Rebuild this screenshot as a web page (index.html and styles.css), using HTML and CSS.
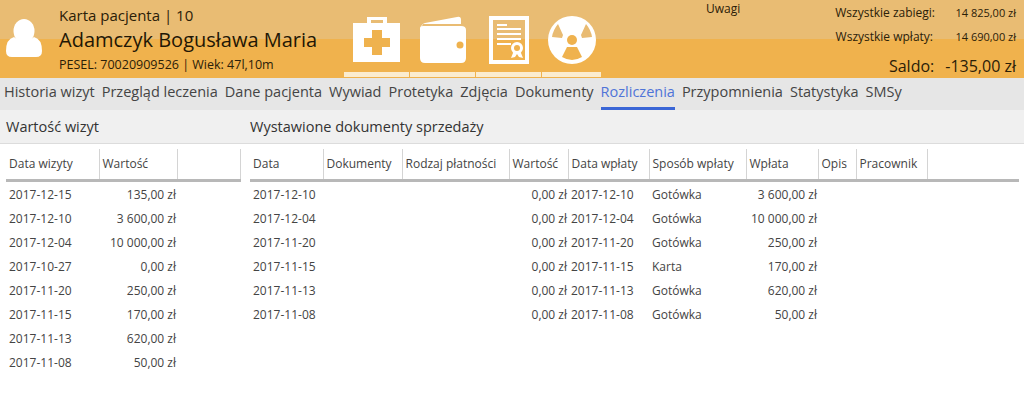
FILE: index.html
```html
<!DOCTYPE html>
<html lang="en">

<head>
    <meta charset="UTF-8">
    <title>Karta pacjenta</title>
    <link rel="stylesheet" href="styles.css">
</head>

<body>
    <header class="top">
        <div class="avatar">
            <svg width="44" height="44" viewBox="0 0 44 44">
                <ellipse cx="24" cy="16" rx="10.5" ry="12" fill="#fff" />
                <path d="M6 40 Q6 28 14 26 Q24 34 34 26 Q42 28 42 40 Q42 46 36 46 L12 46 Q6 46 6 40 Z" fill="#fff" transform="translate(0,-4)" />
            </svg>
        </div>
        <div class="patient">
            <div class="card-no">Karta pacjenta | 10</div>
            <div class="name">Adamczyk Bogusława Maria</div>
            <div class="pesel">PESEL: 70020909526 | Wiek: 47l,10m</div>
        </div>
        <div class="tiles">
            <div class="tile t1">
                <svg width="50" height="46" viewBox="0 0 50 46">
                    <path fill-rule="evenodd" d="M15 7V1H35V7H48V46H1V7ZM19 7H31V4H19Z" fill="#fff" />
                    <path d="M20 14H30V22H38V31H30V39H20V31H12V22H20Z" fill="#efb24e" />
                </svg>
            </div>
            <div class="tile t2">
                <svg width="48" height="48" viewBox="0 0 48 48">
                    <path d="M2 12 Q2 8 6 7 L38 1 Q42 0 42 4 V8 H4 Z" fill="#fff" />
                    <path fill-rule="evenodd" d="M1 12 Q1 10 4 10 H42 Q47 10 47 14 V42 Q47 47 42 47 H6 Q1 47 1 42 Z" fill="#fff" />
                    <circle cx="41" cy="29" r="3.5" fill="#efb24e" />
                </svg>
            </div>
            <div class="tile t3">
                <svg width="40" height="48" viewBox="0 0 40 48">
                    <path fill-rule="evenodd" d="M0 0H40V48H0ZM4 4V44H36V4Z" fill="#fff" />
                    <path d="M8 8H18V10H8ZM8 12H32V14H8ZM8 17H32V19H8ZM8 22H32V24H8ZM8 27H22V29H8Z" fill="#fff" />
                    <circle cx="28" cy="32" r="6" fill="#fff" />
                    <circle cx="28" cy="32" r="3" fill="#efb24e" />
                    <path d="M24 37 L22 42 L26 41 L28 38 L30 41 L34 42 L32 37 Z" fill="#fff" />
                </svg>
            </div>
            <div class="tile t4">
                <svg width="48" height="48" viewBox="0 0 48 48">
                    <circle cx="24" cy="24" r="24" fill="#fff" />
                    <circle cx="24" cy="24" r="5" fill="#efb24e" />
                    <path d="M17 28 L8 33 Q4 26 5 18 Q5 17 6 16 L14 20 Q17 24 17 28Z" fill="#fff" />
                    <path d="M33 19 L38 8 Q43 14 44 21 L34 22Z" fill="#e9bb72" />
                    <path d="M15 19 L10 8 Q5 14 4 21 L14 22Z" fill="#e9bb72" />
                    <path d="M19 31 H29 L34 41 Q24 47 14 41Z" fill="#efb24e" />
                </svg>
            </div>
        </div>
        <div class="notes">Uwagi</div>
        <div class="sums">
            <div class="sum-row first"><span class="sum-label">Wszystkie zabiegi:</span><span class="sum-val">14 825,00 zł</span></div>
            <div class="sum-row second"><span class="sum-label">Wszystkie wpłaty:</span><span class="sum-val">14 690,00 zł</span></div>
            <div class="saldo"><span>Saldo:</span><span>-135,00 zł</span></div>
        </div>
    </header>

    <nav class="tabs">
        <a>Historia wizyt</a>
        <a>Przegląd leczenia</a>
        <a>Dane pacjenta</a>
        <a>Wywiad</a>
        <a>Protetyka</a>
        <a>Zdjęcia</a>
        <a>Dokumenty</a>
        <a class="active">Rozliczenia</a>
        <a>Przypomnienia</a>
        <a>Statystyka</a>
        <a>SMSy</a>
    </nav>

    <main class="content">
        <section class="visits">
            <h2>Wartość wizyt</h2>
            <table>
                <colgroup>
                    <col class="c93">
                    <col class="c78">
                    <col class="c63">
                </colgroup>
                <thead>
                    <tr><th>Data wizyty</th><th>Wartość</th><th></th></tr>
                </thead>
                <tbody>
                    <tr><td>2017-12-15</td><td class="num">135,00 zł</td><td></td></tr>
                    <tr><td>2017-12-10</td><td class="num">3 600,00 zł</td><td></td></tr>
                    <tr><td>2017-12-04</td><td class="num">10 000,00 zł</td><td></td></tr>
                    <tr><td>2017-10-27</td><td class="num">0,00 zł</td><td></td></tr>
                    <tr><td>2017-11-20</td><td class="num">250,00 zł</td><td></td></tr>
                    <tr><td>2017-11-15</td><td class="num">170,00 zł</td><td></td></tr>
                    <tr><td>2017-11-13</td><td class="num">620,00 zł</td><td></td></tr>
                    <tr><td>2017-11-08</td><td class="num">50,00 zł</td><td></td></tr>
                </tbody>
            </table>
        </section>
        <section class="docs">
            <h2>Wystawione dokumenty sprzedaży</h2>
            <table>
                <colgroup>
                    <col class="c73">
                    <col class="c79">
                    <col class="c107">
                    <col class="c59">
                    <col class="c81">
                    <col class="c97">
                    <col class="c72">
                    <col class="c38">
                    <col class="c71">
                    <col class="c92">
                </colgroup>
                <thead>
                    <tr>
                        <th>Data</th><th>Dokumenty</th><th>Rodzaj płatności</th><th>Wartość</th><th>Data wpłaty</th>
                        <th>Sposób wpłaty</th><th>Wpłata</th><th>Opis</th><th>Pracownik</th><th class="blank"></th>
                    </tr>
                </thead>
                <tbody>
                    <tr><td>2017-12-10</td><td></td><td></td><td class="num">0,00 zł</td><td>2017-12-10</td><td>Gotówka</td><td class="num">3 600,00 zł</td><td></td><td></td><td></td></tr>
                    <tr><td>2017-12-04</td><td></td><td></td><td class="num">0,00 zł</td><td>2017-12-04</td><td>Gotówka</td><td class="num">10 000,00 zł</td><td></td><td></td><td></td></tr>
                    <tr><td>2017-11-20</td><td></td><td></td><td class="num">0,00 zł</td><td>2017-11-20</td><td>Gotówka</td><td class="num">250,00 zł</td><td></td><td></td><td></td></tr>
                    <tr><td>2017-11-15</td><td></td><td></td><td class="num">0,00 zł</td><td>2017-11-15</td><td>Karta</td><td class="num">170,00 zł</td><td></td><td></td><td></td></tr>
                    <tr><td>2017-11-13</td><td></td><td></td><td class="num">0,00 zł</td><td>2017-11-13</td><td>Gotówka</td><td class="num">620,00 zł</td><td></td><td></td><td></td></tr>
                    <tr><td>2017-11-08</td><td></td><td></td><td class="num">0,00 zł</td><td>2017-11-08</td><td>Gotówka</td><td class="num">50,00 zł</td><td></td><td></td><td></td></tr>
                </tbody>
            </table>
        </section>
    </main>
</body>

</html>
```

FILE: styles.css
```css
* {
    margin: 0;
    padding: 0;
    box-sizing: border-box;
}

body {
    font-family: "Open Sans", sans-serif;
    background-color: #fff;
    color: #333;
    overflow: hidden;
}

.top {
    height: 78px;
    display: flex;
    color: #2b2008;
    background: linear-gradient(#e9bc73 0, #e9bc73 39px, #f0b24d 39px, #f0b24d 100%);
}

.avatar {
    width: 59px;
    padding: 15px 0 0 0;
}

.patient {
    width: 285px;
    padding-top: 3px;
}

.card-no {
    font-size: 15px;
    line-height: 24px;
}

.name {
    font-size: 20px;
    line-height: 26px;
    color: #1f1706;
}

.pesel {
    font-size: 12.5px;
    line-height: 22px;
    margin-top: 1px;
}

.tiles {
    display: flex;
    gap: 1px;
    width: 360px;
    height: 78px;
}

.tile {
    height: 77px;
    padding-top: 16px;
    border-bottom: 5px solid #fbeccf;
    display: flex;
    justify-content: center;
}

.t1 {
    width: 65px;
}

.t2 {
    width: 65px;
}

.t3 {
    width: 65px;
}

.t4 {
    width: 59px;
}

.notes {
    width: 120px;
    font-size: 12px;
    line-height: 18px;
    padding-left: 2px;
}

.sums {
    flex: 1;
    padding-right: 8px;
    font-size: 11.5px;
}

.sum-row {
    display: flex;
    justify-content: flex-end;
    height: 24px;
    align-items: center;
}

.sum-row.first {
    margin-top: 0;
}

.sum-label {
    font-size: 12px;
}

.sum-row.second .sum-label {
    margin-right: 2px;
}

.sum-val {
    width: 81px;
    text-align: right;
    font-size: 11px;
}

.saldo {
    display: flex;
    justify-content: flex-end;
    gap: 11px;
    font-size: 16px;
    line-height: 22px;
    margin-top: 7px;
}

.tabs {
    height: 32px;
    display: flex;
    background-color: #e6e6e6;
    padding-left: 4px;
    font-size: 14.5px;
    gap: 7px;
}

.tabs a {
    height: 32px;
    line-height: 28px;
    color: #444;
    white-space: nowrap;
}

.tabs a.active {
    color: #4f74d8;
    border-bottom: 3px solid #3a66d6;
}

.content {
    display: flex;
}

h2 {
    height: 34px;
    font-size: 14.5px;
    font-weight: 400;
    line-height: 34px;
    color: #333;
    background-color: #f0f0f0;
    border-bottom: 1px solid #dcdcdc;
}

.visits {
    width: 250px;
}

.visits h2 {
    padding-left: 6px;
}

.docs {
    flex: 1;
}

table {
    border-collapse: collapse;
    table-layout: fixed;
    margin-top: 5px;
    font-size: 12px;
    color: #444;
}

.visits table {
    width: 234px;
    margin-left: 6px;
}

.docs table {
    width: 768px;
}

.c93 { width: 93px; }
.c78 { width: 78px; }
.c63 { width: 63px; }
.c73 { width: 73px; }
.c79 { width: 79px; }
.c107 { width: 107px; }
.c59 { width: 59px; }
.c81 { width: 81px; }
.c97 { width: 97px; }
.c72 { width: 72px; }
.c38 { width: 38px; }
.c71 { width: 71px; }
.c92 { width: 92px; }

th {
    height: 31px;
    font-weight: 400;
    text-align: left;
    padding: 0 3px;
    white-space: nowrap;
    border-right: 1px solid #d4d4d4;
    border-bottom: 3px solid #b8b8b8;
}

th:last-child {
    border-right: none;
}

.visits th:last-child {
    border-right: 1px solid #d4d4d4;
}

td {
    height: 24px;
    padding: 0 3px;
    white-space: nowrap;
}

.visits tbody tr:first-child td,
.docs tbody tr:first-child td {
    height: 26px;
    padding-top: 2px;
}

.num {
    text-align: right;
    padding-right: 1px;
}
```
